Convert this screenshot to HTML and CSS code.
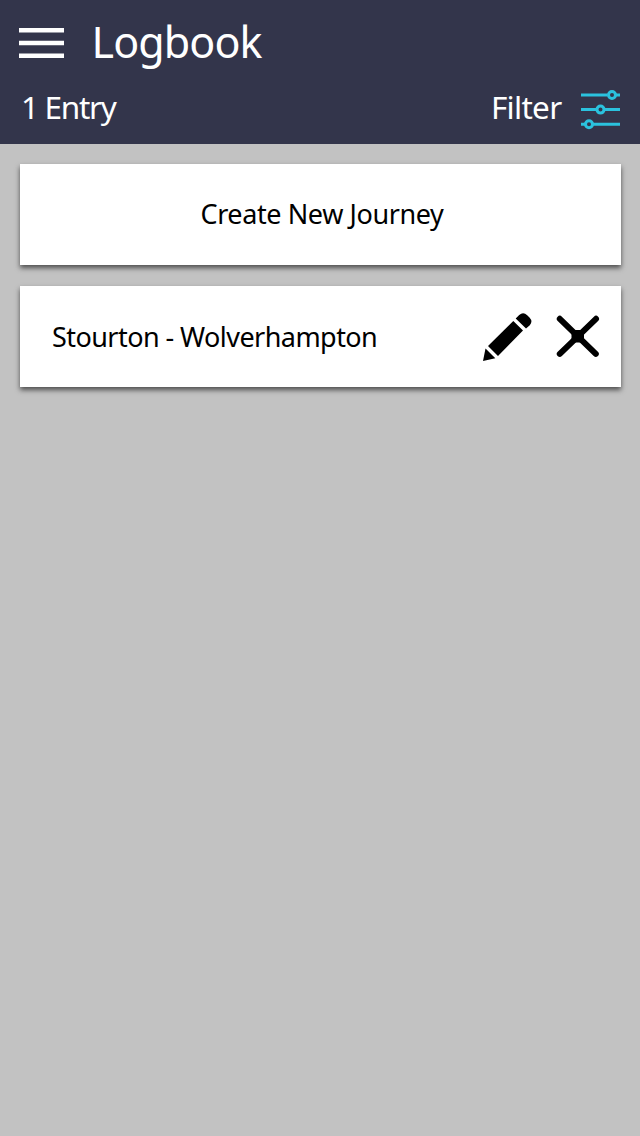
FILE: index.html
```html
<!DOCTYPE html>
<html lang="en">
<head>
<meta charset="utf-8">
<title>Logbook</title>
<link rel="stylesheet" href="styles.css">
</head>
<body>
<header class="header">
  <div class="title-row">
    <svg class="menu-icon" width="45" height="30" viewBox="0 0 45 30" fill="#fff"><path d="M0 0h45v4.5H0zM0 12.700h45v4.500H0zM0 25.400h45V30H0z"/></svg>
    <h1 class="title">Logbook</h1>
  </div>
  <div class="sub-row">
    <span class="count">1 Entry</span>
    <span class="filter">Filter</span>
    <svg class="filter-icon" width="40" height="40" viewBox="0 0 40 40" fill="none" stroke="#2bc2de" stroke-width="3"><path d="M1 5h26.500M35 5h5M1 19.600h15.500M24 19.600h16M1 34.300h4.500M12.500 34.300H40"/><circle cx="32" cy="5" r="3.500"/><circle cx="20.500" cy="19.600" r="3.500"/><circle cx="9" cy="34.300" r="3.500"/></svg>
  </div>
</header>
<main class="list">
  <div class="card create"><span class="create-label">Create New Journey</span></div>
  <div class="card entry">
    <span class="entry-label">Stourton - Wolverhampton</span>
    <svg class="edit-icon" width="60" height="60" viewBox="0 0 60 60"><path d="M10 38L35.300 13l9.700 9.500L20 48zM37.700 10.500l3.500-3.500q4-3.700 8 .2l2.300 2.300q3.700 4 .3 7.700L48 20.500zM5 53l2.500-12.500 9.800 9.800z"/></svg>
    <svg class="delete-icon" width="60" height="60" viewBox="0 0 60 60"><path d="M9.800 10.800l36 35M46 10.800L9.800 45.800" stroke="#000" stroke-width="6" stroke-linecap="round"/><path d="M24.500 22h6.500l3 3v6.500l-3 3h-6.500l-3-3V25z"/></svg>
  </div>
</main>
</body>
</html>
```
FILE: styles.css
```css
body {
  margin: 0;
  min-height: 1136px;
  background: #c2c2c2;
  color: #000;
  font-family: "Noto Sans", sans-serif;
}
.header {
  box-sizing: border-box;
  height: 144px;
  background: #33354b;
  color: #fff;
}
.title-row {
  display: flex;
  height: 82px;
  padding-left: 19px;
}
.menu-icon { margin-top: 28px; }
.title {
  margin: 1px 0 0 27.500px;
  font-size: 43px;
  font-weight: 400;
  line-height: 82px;
  letter-spacing: -0.9px;
}
.sub-row {
  display: flex;
  align-items: center;
  height: 50px;
  padding: 0 20px 0 21px;
  font-size: 31.500px;
  line-height: 50px;
  white-space: nowrap;
}
.count { letter-spacing: -1.3px; }
.filter {
  margin-left: auto;
  letter-spacing: -0.7px;
}
.filter-icon { margin: 6px 0 0 18.500px; }
.list {
  display: flex;
  flex-direction: column;
  gap: 21px;
  padding: 20px 19px 0 20px;
}
.card {
  display: flex;
  align-items: center;
  height: 101px;
  background: #fff;
  box-shadow: 0 3px 5px rgba(0, 0, 0, 0.6);
  font-size: 27px;
  line-height: 40px;
  white-space: nowrap;
}
.create { justify-content: center; }
.create-label {
  margin: -1px 0 0 3px;
  letter-spacing: -0.4px;
}
.entry { padding: 0 11px 0 32px; }
.entry-label {
  margin-top: 1px;
  letter-spacing: -0.56px;
}
.edit-icon { margin: 3px 0 0 auto; }
.delete-icon { margin: 3px 0 0 12px; }
```
